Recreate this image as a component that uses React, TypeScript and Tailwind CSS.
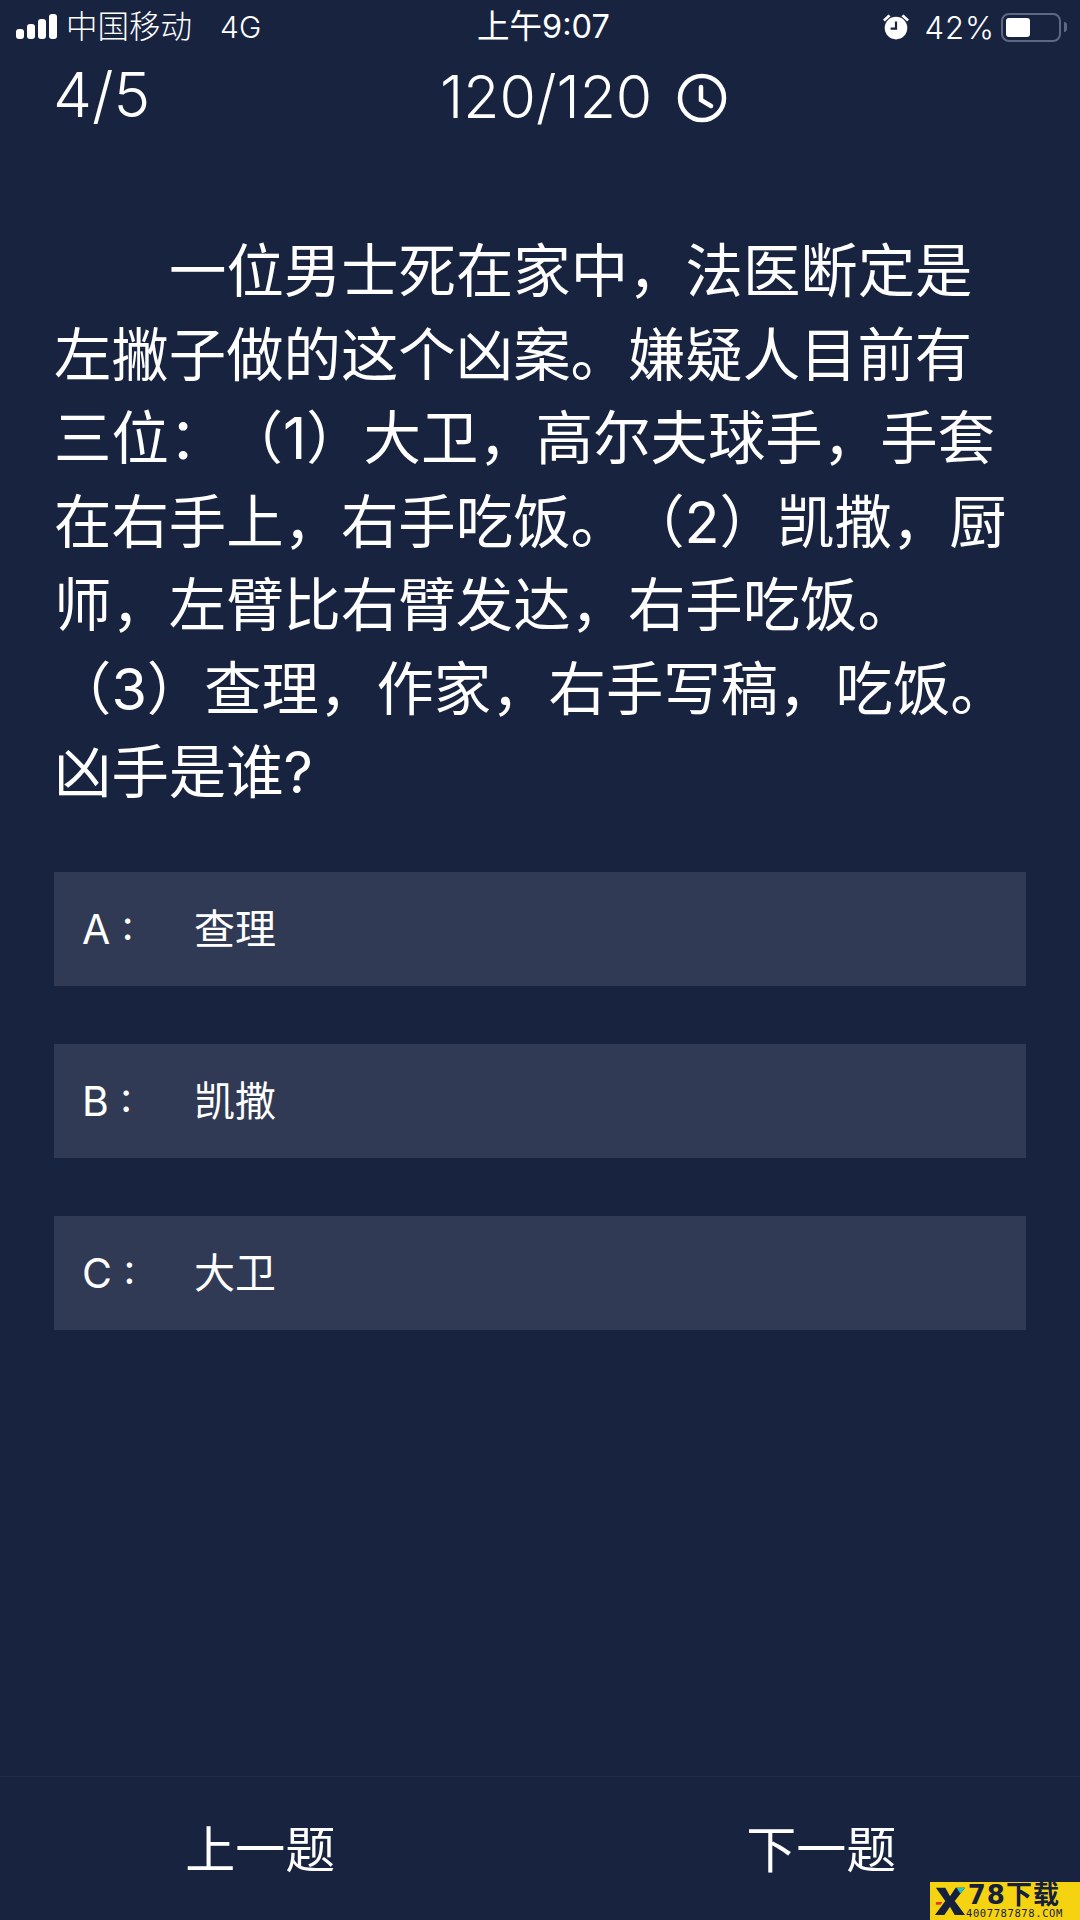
import React from "react";

const FONT = "font-['Inter','Noto_Sans_CJK_SC',sans-serif]";

// a run in the middle of a line gets a small gap before it, as in the original text
const questionLines: { text: string; after?: string; indent?: boolean }[] = [
  { text: "一位男士死在家中，法医断定是", indent: true },
  { text: "左撇子做的这个凶案。嫌疑人目前有" },
  { text: "三位：", after: "（1）大卫，高尔夫球手，手套" },
  { text: "在右手上，右手吃饭。", after: "（2）凯撒，厨" },
  { text: "师，左臂比右臂发达，右手吃饭。" },
  { text: "（3）查理，作家，右手写稿，吃饭。" },
  { text: "凶手是谁?" },
];

const options = [
  { key: "A", text: "查理" },
  { key: "B", text: "凯撒" },
  { key: "C", text: "大卫" },
];

const StatusBar = () => (
  <div className="relative flex h-[54px] items-center justify-between pl-[16px] pr-[13px] text-[31.5px] font-light leading-none">
    <div className="flex items-center">
      <svg width="42" height="26" viewBox="0 0 42 26" fill="white">
        <rect x="0" y="15" width="8" height="10" rx="3" />
        <rect x="11" y="10" width="8" height="15" rx="3" />
        <rect x="22" y="5" width="8" height="20" rx="3" />
        <rect x="33" y="0" width="8" height="25" rx="3" />
      </svg>
      <span className="ml-[8px]">中国移动</span>
      <span className="ml-[28px] text-[30px]">4G</span>
    </div>
    <span className="absolute left-[477px] top-[11px] text-[32.5px] font-normal">上午9:07</span>
    <div className="flex items-center">
      <svg width="28" height="28" viewBox="0 0 26 26" fill="white">
        <circle cx="13" cy="14" r="10.5" />
        <path d="M1 6 L6 1.5 L8 3 L2.5 8 Z M25 6 L20 1.5 L18 3 L23.5 8 Z" />
        <path d="M13 8 V14.5 H8" fill="none" stroke="#18233f" strokeWidth="2" />
      </svg>
      <span className="ml-[14px] text-[31px] tracking-[1px]">42%</span>
      <div className="ml-[6px] flex h-[29px] w-[60px] items-center rounded-[8px] border-2 border-[#5f6882] p-[3px]">
        <div className="h-full w-[24px] rounded-[3px] bg-white" />
      </div>
      <div className="ml-[3px] h-[10px] w-[3px] rounded-r-full bg-[#5f6882]" />
    </div>
  </div>
);

export default function App() {
  return (
    <div className={`relative flex h-[1920px] w-[1080px] flex-col overflow-hidden bg-[#18233f] text-white ${FONT}`}>
      <StatusBar />

      {/* progress + timer */}
      <div className="relative mt-[9px] h-[64px] pl-[53px] font-light leading-[64px]">
        <span className="text-[62px]">4/5</span>
        <div className="absolute left-[440px] top-[2px] flex items-center text-[59px]">
          <span>120/120</span>
          <svg className="ml-[25px] mt-[2px]" width="50" height="50" viewBox="0 0 50 50" fill="none" stroke="white" strokeWidth="4.5" strokeLinecap="round">
            <circle cx="25" cy="25" r="22" />
            <path d="M24 14 V27 L34 33" />
          </svg>
        </div>
      </div>

      {/* question */}
      <div className="mt-[103px] px-[54px] text-[57.4px] font-normal leading-[83.5px]">
        {questionLines.map((line, i) => (
          <div key={i} className={`whitespace-nowrap ${line.indent ? "pl-[115px]" : ""}`}>
            {line.text}
            {line.after && <span className="ml-[28px]">{line.after}</span>}
          </div>
        ))}
      </div>

      {/* options */}
      <div className="mt-[57px] flex flex-col gap-[58px] px-[54px]">
        {options.map((o) => (
          <div key={o.key} className="flex h-[114px] items-center bg-[#313a55] pl-[28px] pt-[3px] text-[41px] font-normal">
            <span className="w-[112px]">{o.key} :</span>
            <span>{o.text}</span>
          </div>
        ))}
      </div>

      {/* bottom nav */}
      <div className="absolute bottom-0 left-0 flex h-[144px] w-full items-center border-t border-[#222c48] pt-[4px] text-[50px] font-normal">
        <div className="w-[521px] text-center">上一题</div>
        <div className="w-[560px] pl-[42px] text-center">下一题</div>
      </div>

      {/* watermark */}
      <div className="absolute bottom-0 right-0 flex h-[38px] w-[150px] items-center bg-[#f5d311] text-[#14203c]">
        <svg className="ml-[4px] shrink-0" width="32" height="34" viewBox="0 0 34 34">
          <path d="M2 3 H12 L17 12 L23 3 H33 L22 17 L33 32 H22 L17 23 L11 32 H1 L12 17 Z" fill="#14203c" />
          <path d="M24 3 H33 L28 9 Z" fill="#22c6c0" />
          <path d="M2 18 H9 L7 21 H2 Z" fill="#e2372f" />
        </svg>
        <div className="flex flex-col items-end leading-none">
          <span className="h-[25px] pr-[3px] text-[26px] font-bold leading-[25px] tracking-[1px] font-['DejaVu_Sans','Noto_Sans_CJK_SC',sans-serif]">78下载</span>
          <span className="h-[11px] text-[10.5px] font-medium leading-[11px] tracking-[0.6px] font-['DejaVu_Sans_Mono',monospace]">4007787878.COM</span>
        </div>
      </div>
    </div>
  );
}
